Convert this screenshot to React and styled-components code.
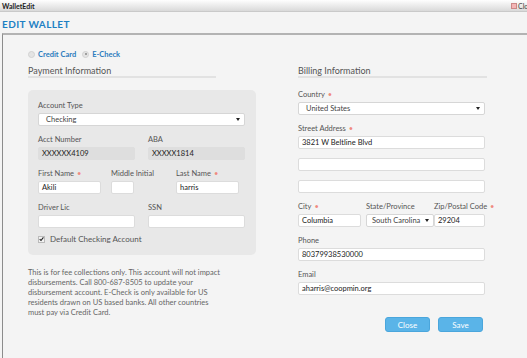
import React from 'react'
import styled, { createGlobalStyle } from 'styled-components'

const GlobalStyle = createGlobalStyle`
  html, body {
    margin: 0;
    padding: 0;
    background: #f4f4f4;
  }
  body {
    font-family: Lato, "Open Sans", "Liberation Sans", sans-serif;
    color: #555;
  }
  * { box-sizing: border-box; }
`

const Window = styled.div`
  min-height: 358px;
  display: flex;
  flex-direction: column;
  background: #f4f4f4;
`

const TitleBar = styled.div`
  height: 12px;
  display: flex;
  align-items: center;
  justify-content: space-between;
  padding-left: 2px;
  background: linear-gradient(#fefefe, #d9d9d9);
  border-bottom: 1px solid #c9c9c9;
  font-size: 7px;
  font-weight: bold;
  color: #222;
  overflow: hidden;
`

const CloseLink = styled.span`
  display: flex;
  align-items: center;
  gap: 1px;
  font-size: 7px;
  font-weight: normal;
  color: #444;
  margin-right: -8px;
`

const CloseIcon = styled.span`
  width: 6px;
  height: 6px;
  border: 1px solid #c88;
  background: #f3b5b5;
`

const Heading = styled.h1`
  margin: 0;
  height: 21px;
  padding: 2px 0 0 2px;
  line-height: 21px;
  font-size: 10px;
  font-weight: bold;
  letter-spacing: 0.4px;
  color: #1d7fc3;
`

const Body = styled.div`
  flex: 1;
  margin-left: 2px;
  border-top: 2px solid #b3b3b3;
  border-left: 1px solid #8c8c8c;
  padding: 14px 0 20px 25px;
`

const RadioRow = styled.div`
  display: flex;
  align-items: center;
  gap: 6px;
  height: 10px;
`

const RadioOption = styled.label`
  display: flex;
  align-items: center;
  gap: 3px;
  font-size: 7.5px;
  font-weight: bold;
  color: #2b7bbd;
`

const RadioDot = styled.span`
  width: 7px;
  height: 7px;
  border-radius: 50%;
  background: #e4e4e4;
  border: 1px solid #d2d2d2;
  display: flex;
  align-items: center;
  justify-content: center;
  &::after {
    content: '';
    width: 2px;
    height: 2px;
    border-radius: 50%;
    background: ${p => (p.$checked ? '#888' : 'transparent')};
  }
`

const Columns = styled.div`
  display: grid;
  grid-template-columns: 228px 189px;
  column-gap: 42px;
  margin-top: 6px;
`

const Column = styled.div`
  display: flex;
  flex-direction: column;
`

const SectionTitle = styled.div`
  width: ${p => p.$width || 188}px;
  font-size: 9px;
  line-height: 11px;
  color: #555;
  border-bottom: 2px solid #e2e2e2;
  margin-bottom: 12px;
`

const Panel = styled.div`
  background: #e8e8e8;
  border-radius: 5px;
  padding: 11px 11px 11px 10px;
`

const FieldRow = styled.div`
  display: grid;
  grid-template-columns: ${p => p.$cols};
  column-gap: ${p => p.$gap || 0}px;
`

const Field = styled.div`
  display: flex;
  flex-direction: column;
  margin-bottom: ${p => (p.$last ? 0 : 9)}px;
`

const Label = styled.div`
  font-size: 7.5px;
  line-height: 9px;
  height: 9px;
  margin-bottom: 3px;
  color: #555;
  white-space: nowrap;
`

const Required = styled.span`
  color: #f08a80;
  margin-left: 3px;
`

const Input = styled.div`
  width: ${p => (p.$width ? `${p.$width}px` : '100%')};
  height: 13px;
  border: 1px solid ${p => (p.$disabled ? '#dedede' : '#dcdcdc')};
  border-radius: 2px;
  background: ${p => (p.$disabled ? '#dedede' : '#fff')};
  font-size: 7.5px;
  line-height: 11px;
  padding: 0 3px;
  color: #222;
  white-space: nowrap;
  overflow: hidden;
`

const SelectBox = styled(Input)`
  display: flex;
  align-items: center;
  justify-content: space-between;
  padding: 0 4px 0 ${p => p.$pad || 7}px;
  color: #444;
  border-color: #d6d6d6;
  &::after {
    content: '';
    border-left: 2px solid transparent;
    border-right: 2px solid transparent;
    border-top: 3px solid #222;
  }
`

const ExtraInput = styled(Input)`
  margin-top: ${p => p.$top || 0}px;
`

const CheckRow = styled.label`
  display: flex;
  align-items: center;
  gap: 5px;
  margin-top: 6px;
  height: 10px;
  font-size: 8px;
  color: #555;
`

const CheckBox = styled.span`
  width: 7px;
  height: 7px;
  border: 1px solid #bbb;
  background: #f2f2f2;
  display: flex;
  align-items: center;
  justify-content: center;
`

const Note = styled.p`
  margin: 13px 0 0;
  width: 196px;
  font-size: 7.5px;
  line-height: 10px;
  color: #666;
`

const ButtonRow = styled.div`
  display: flex;
  justify-content: flex-end;
  gap: 8px;
  margin-top: 22px;
  padding-right: 4px;
`

const Button = styled.button`
  width: 45px;
  height: 15px;
  padding: 0;
  border: 1px solid #4aa6dc;
  border-radius: 3px;
  background: #5ab4e8;
  color: #fff;
  font-family: inherit;
  font-size: 8px;
`

export default function App() {
  return (
    <Window>
      <GlobalStyle />
      <TitleBar>
        <span>WalletEdit</span>
        <CloseLink><CloseIcon />Close</CloseLink>
      </TitleBar>
      <Heading>EDIT WALLET</Heading>
      <Body>
        <RadioRow>
          <RadioOption><RadioDot />Credit Card</RadioOption>
          <RadioOption><RadioDot $checked />E-Check</RadioOption>
        </RadioRow>
        <Columns>
          <Column>
            <SectionTitle>Payment Information</SectionTitle>
            <Panel>
              <Field>
                <Label>Account Type</Label>
                <SelectBox $pad={7}>Checking</SelectBox>
              </Field>
              <FieldRow $cols="97px 97px" $gap={13}>
                <Field>
                  <Label>Acct Number</Label>
                  <Input $disabled>XXXXXX4109</Input>
                </Field>
                <Field>
                  <Label>ABA</Label>
                  <Input $disabled>XXXXX1814</Input>
                </Field>
              </FieldRow>
              <FieldRow $cols="73px 65px 69px">
                <Field>
                  <Label>First Name<Required>•</Required></Label>
                  <Input $width={63}>Akili</Input>
                </Field>
                <Field>
                  <Label>Middle Initial</Label>
                  <Input $width={23} />
                </Field>
                <Field>
                  <Label>Last Name<Required>•</Required></Label>
                  <Input $width={63}>harris</Input>
                </Field>
              </FieldRow>
              <FieldRow $cols="97px 97px" $gap={13}>
                <Field $last>
                  <Label>Driver Lic</Label>
                  <Input />
                </Field>
                <Field $last>
                  <Label>SSN</Label>
                  <Input />
                </Field>
              </FieldRow>
              <CheckRow>
                <CheckBox>
                  <svg width="6" height="6" viewBox="0 0 6 6">
                    <path d="M0.8 3.2 L2.4 4.8 L5.3 1" fill="none" stroke="#222" strokeWidth="1.3" />
                  </svg>
                </CheckBox>
                Default Checking Account
              </CheckRow>
            </Panel>
            <Note>
              This is for fee collections only. This account will not impact
              disbursements. Call 800-687-8505 to update your disbursement
              account. E-Check is only available for US residents drawn on US
              based banks. All other countries must pay via Credit Card.
            </Note>
          </Column>
          <Column>
            <SectionTitle $width={189}>Billing Information</SectionTitle>
            <Field>
              <Label>Country<Required>•</Required></Label>
              <SelectBox $width={187}>United States</SelectBox>
            </Field>
            <Field>
              <Label>Street Address<Required>•</Required></Label>
              <Input $width={187}>3821 W Beltline Blvd</Input>
              <ExtraInput $width={187} $top={9} />
              <ExtraInput $width={187} $top={9} />
            </Field>
            <FieldRow $cols="68px 68px 51px">
              <Field>
                <Label>City<Required>•</Required></Label>
                <Input $width={63}>Columbia</Input>
              </Field>
              <Field>
                <Label>State/Province</Label>
                <SelectBox $width={68} $pad={5}>South Carolina</SelectBox>
              </Field>
              <Field>
                <Label>Zip/Postal Code<Required>•</Required></Label>
                <Input $width={51}>29204</Input>
              </Field>
            </FieldRow>
            <Field>
              <Label>Phone</Label>
              <Input $width={187}>80379938530000</Input>
            </Field>
            <Field $last>
              <Label>Email</Label>
              <Input $width={187}>aharris@coopmin.org</Input>
            </Field>
            <ButtonRow>
              <Button>Close</Button>
              <Button>Save</Button>
            </ButtonRow>
          </Column>
        </Columns>
      </Body>
    </Window>
  )
}
